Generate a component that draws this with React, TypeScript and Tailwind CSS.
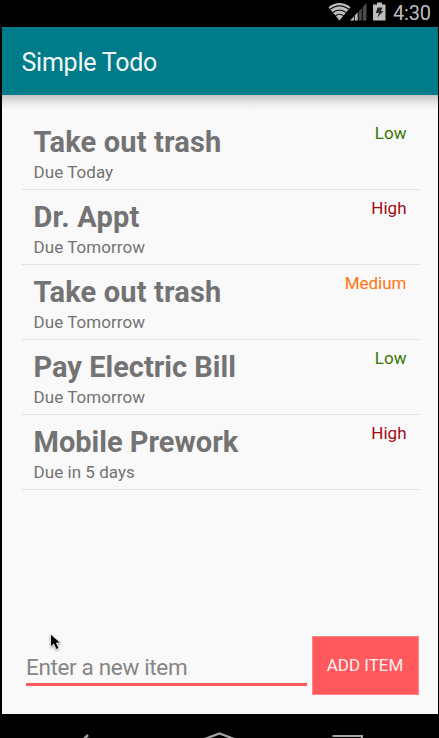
import React from "react";

type Item = { title: string; due: string; priority: "Low" | "Medium" | "High"; tracking: string };

const items: Item[] = [
  { title: "Take out trash", due: "Due Today", priority: "Low", tracking: "tracking-[0.16px]" },
  { title: "Dr. Appt", due: "Due Tomorrow", priority: "High", tracking: "tracking-[0.2px]" },
  { title: "Take out trash", due: "Due Tomorrow", priority: "Medium", tracking: "tracking-[0.16px]" },
  { title: "Pay Electric Bill", due: "Due Tomorrow", priority: "Low", tracking: "tracking-normal" },
  { title: "Mobile Prework", due: "Due in 5 days", priority: "High", tracking: "tracking-normal" },
];

const colors = {
  Low: "text-[#387500]",
  Medium: "text-[#ff7411]",
  High: "text-[#a30a10]",
};

function StatusBar() {
  return (
    <div className="flex h-[27px] shrink-0 items-start justify-end pr-[8px] text-[#bdbdbd]">
      <svg className="h-[27px] w-[62px]" viewBox="0 0 62 27" fill="none">
        <path d="M0.5 7.2Q11.5-1 22.500 7.200L11.500 20.500Z" fill="#bdbdbd" />
        <path d="M1.800 9.400Q11.500 2 21.200 9.400M4.600 12.600Q11.500 7.300 18.400 12.600M7.500 15.700Q11.500 12.700 15.500 15.700" stroke="#000" strokeWidth="1.100" />
        <path d="M22 20.500L26 16.500V20.500Z" fill="#bdbdbd" />
        <path d="M26.800 15.600L29.700 12.300V20.500H26.800Z" fill="#bdbdbd" />
        <path d="M30.700 11.300L33.700 8.200V20.500H30.700ZM34.700 7.200L38.500 3V20.500H34.700Z" fill="#4b4b4b" />
        <path d="M45 4.500H49V2.500H54V4.500H57.500V20.500H45Z" fill="#bdbdbd" />
        <path d="M49.500 7.500H54.500L53 11H55.500L49.300 17.500L51 13H47.800Z" fill="#292929" />
      </svg>
      <span className="ml-[3px] mt-px w-[38px] whitespace-nowrap text-[20px] leading-[24px] tracking-[-0.2px]">4:30</span>
    </div>
  );
}

function TodoRow({ item }: { item: Item }) {
  return (
    <li className="flex h-[75px] justify-between border-b border-[#e2e2e2] pl-[12px] pr-[12px]">
      <div className="pt-[10px] text-[#737373]">
        <h2 className={"whitespace-nowrap text-[29px] font-bold leading-[34px] " + item.tracking}>{item.title}</h2>
        <p className="mt-[3px] text-[17px] leading-[20px] tracking-[0.05px]">{item.due}</p>
      </div>
      <span className={"pt-[8px] text-[17px] leading-[20px] " + colors[item.priority]}>{item.priority}</span>
    </li>
  );
}

export default function App() {
  return (
    <div className="relative flex h-[738px] w-[439px] flex-col overflow-hidden bg-black font-['Roboto',sans-serif]">
      <StatusBar />
      <main className="ml-[2px] mr-px flex h-[687px] shrink-0 flex-col bg-[#f9f9f9]">
        <header className="flex h-[68px] shrink-0 items-center bg-[#007b89] pl-[19.5px] pt-[3px]">
          <h1 className="whitespace-nowrap text-[25px] leading-[30px] tracking-[-0.25px] text-[#f2f8f8]">Simple Todo</h1>
        </header>
        <div className="h-[15px] shrink-0 bg-linear-to-b from-[#c4c4c4] via-[#e6e6e6] to-[#f9f9f9]" />
        <ul className="ml-[19.5px] mr-[19.5px] mt-[5px]">
          {items.map((item, i) => (
            <TodoRow key={i} item={item} />
          ))}
        </ul>
        <form className="mb-[19px] ml-[24px] mr-[19.5px] mt-auto flex h-[59px] justify-between">
          <label className="mt-[14px] h-[36px] w-[281px] border-b-3 border-[#ff595d]">
            <span className="block whitespace-nowrap text-[22.5px] leading-[34px] tracking-[-0.35px] text-[#858585]">Enter a new item</span>
          </label>
          <button type="button" className="w-[107px] whitespace-nowrap border border-[#ff8488] bg-[#ff595d] pt-px text-[17px] text-[#fff0f0]">ADD ITEM</button>
        </form>
      </main>
      <nav className="h-[24px] shrink-0">
        <svg className="h-[24px] w-[439px]" viewBox="0 0 439 24" fill="none" stroke="#a5a5a5">
          <path d="M88 21L80 29" strokeWidth="2.500" />
          <path d="M202 26L219.500 19.500L237 26" strokeWidth="2.200" />
          <path d="M332.500 22H362V26" strokeWidth="2" />
        </svg>
      </nav>
      <svg className="absolute left-[49px] top-[632px] h-[20px] w-[14px]" viewBox="0 0 14 20">
        <path d="M1.500 2V15L4.700 12L7.200 17.500L10 16.300L7.500 11H11.800Z" fill="#000" stroke="#fff" strokeWidth="0.800" className="drop-shadow-[0_1px_1px_rgba(0,0,0,0.4)]" />
      </svg>
    </div>
  );
}
